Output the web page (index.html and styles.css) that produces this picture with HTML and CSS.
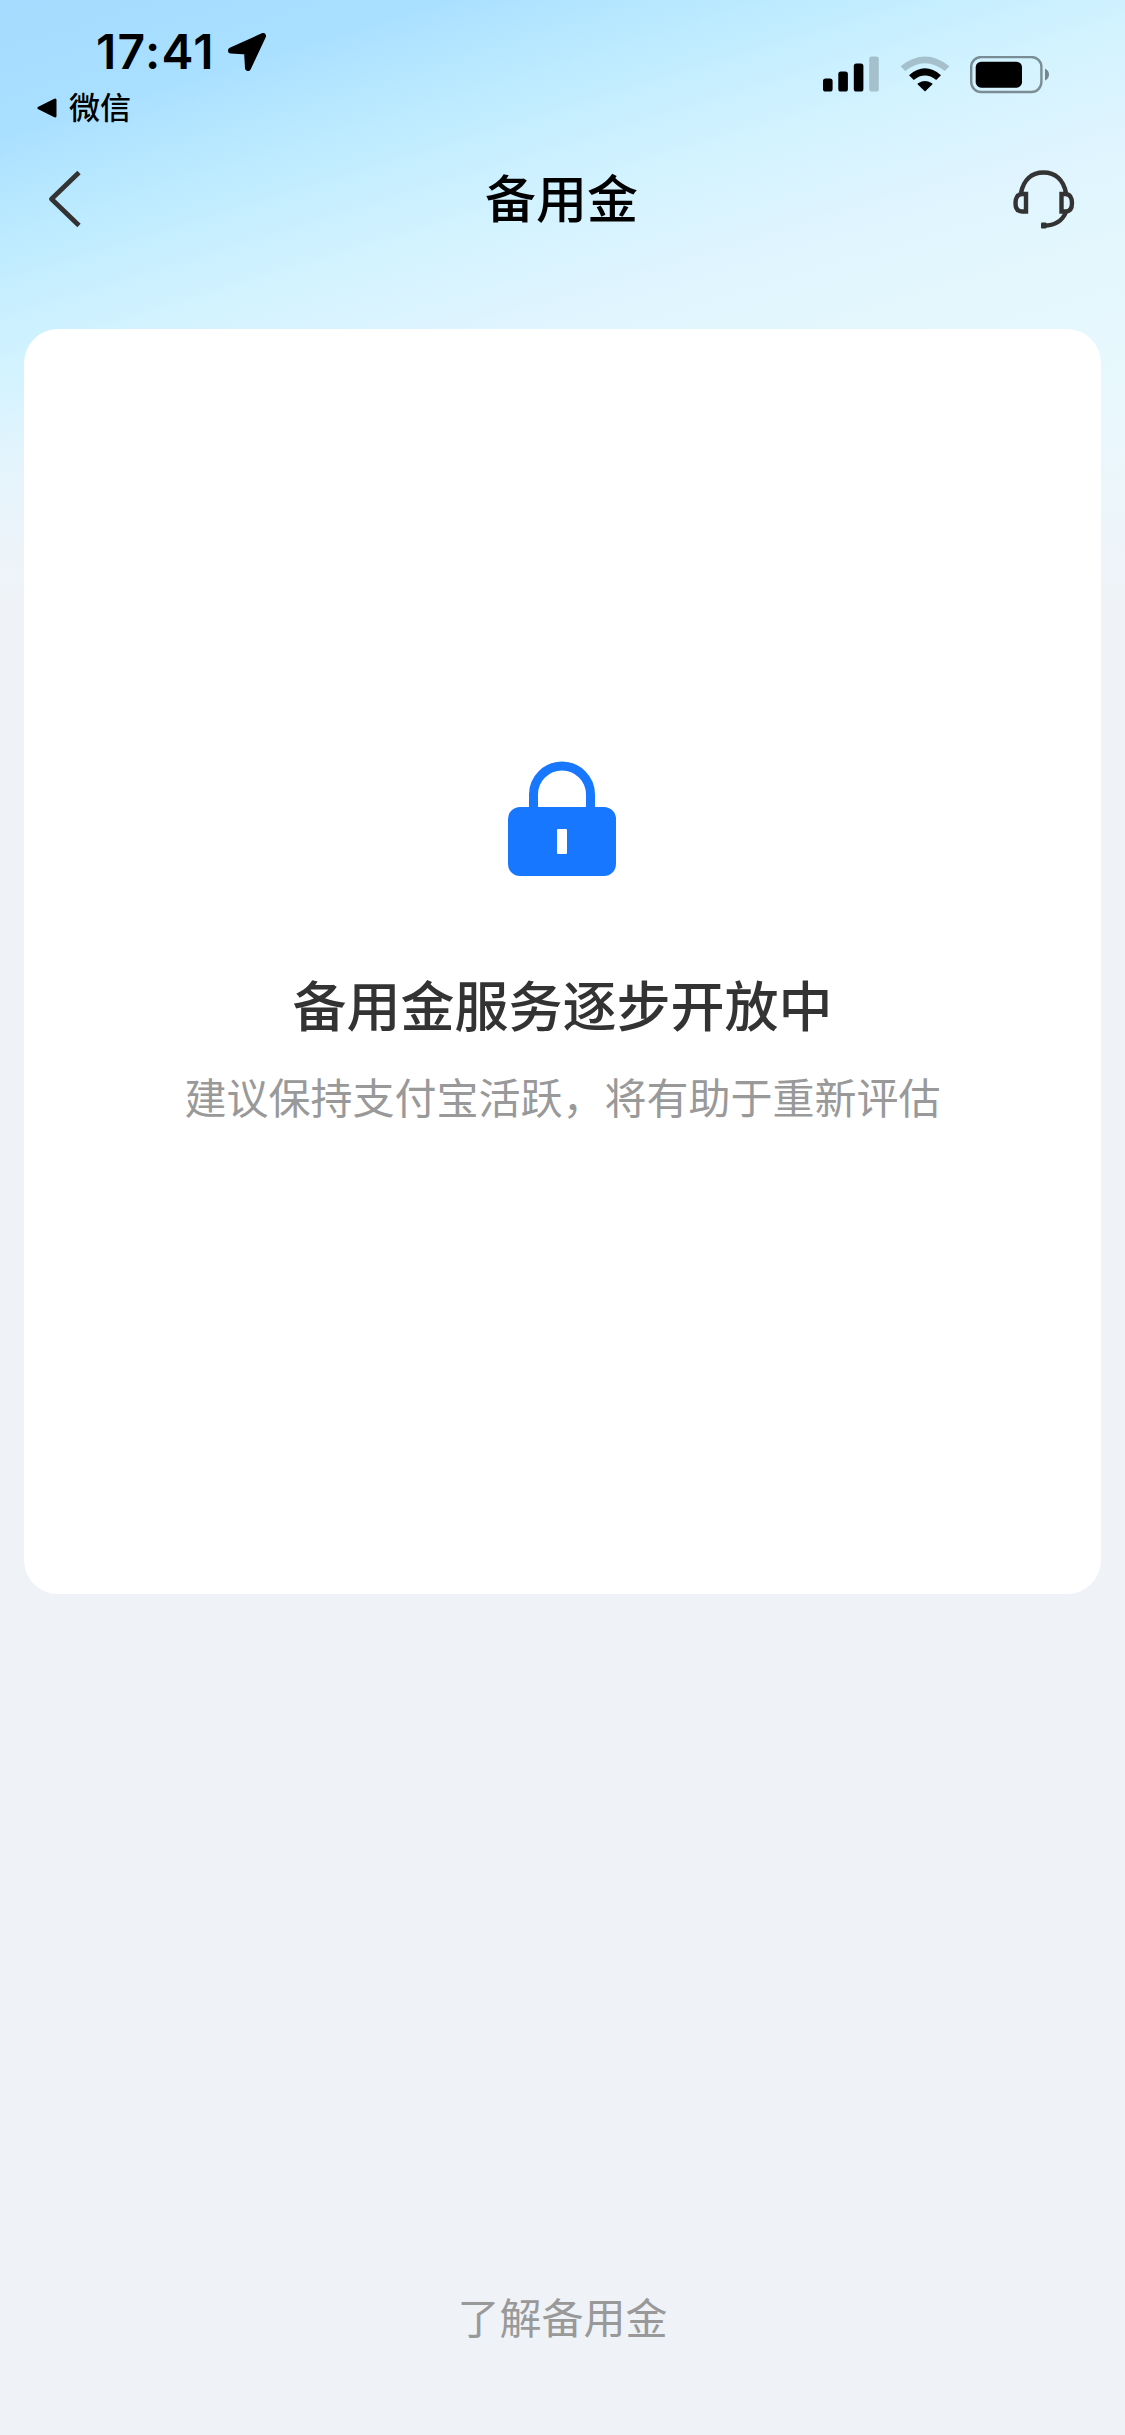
FILE: index.html
```html
<!DOCTYPE html>
<html lang="zh-CN">
<head>
    <meta charset="UTF-8">
    <meta name="viewport" content="width=device-width, initial-scale=1.0">
    <title>备用金</title>
    <link rel="stylesheet" href="styles.css">
</head>
<body>
    <header>
        <div class="status-bar">
            <div class="status-left">
                <div class="clock">
                    <span class="time">17:41</span>
                    <svg class="location" width="38" height="38" viewBox="0 0 38 38">
                        <path d="M3 17.5 L35 3 L20 35 L19 18.5 Z" fill="#000" stroke="#000" stroke-width="6" stroke-linejoin="round"/>
                    </svg>
                </div>
                <a class="back-app" href="#">
                    <svg width="20" height="20" viewBox="0 0 20 20">
                        <path d="M2 10 L18 2 V18 Z" fill="#000" stroke="#000" stroke-width="3" stroke-linejoin="round"/>
                    </svg>
                    <span>微信</span>
                </a>
            </div>
            <div class="status-right">
                <svg class="signal" width="56" height="36" viewBox="0 0 56 36">
                    <rect x="0" y="22.5" width="9.6" height="13" rx="2.6"/>
                    <rect x="15.3" y="15.5" width="9.6" height="20" rx="2.6"/>
                    <rect x="30.8" y="7.5" width="9.6" height="28" rx="2.6"/>
                    <rect x="46.2" y="0.5" width="9.6" height="35" rx="2.6" opacity="0.2"/>
                </svg>
                <svg class="wifi" width="50" height="36" viewBox="0 0 50 36">
                    <path d="M25 35.5 L17.5 28.3 Q17.5 27.5 18.5 27 Q25 23 31.500 27 Q32.500 27.500 32.500 28.300 Z"/>
                    <path d="M9 19.2 Q25 5.5 41 19.2 L36.2 24 Q25 15.2 13.8 24 Z"/>
                    <path d="M0.6 10.2 Q25 -9.2 49.4 10.2 L44.8 15.1 Q25 -0.8 5.2 15.1 Z" opacity="0.2"/>
                </svg>
                <svg class="battery" width="80" height="38" viewBox="0 0 80 38">
                    <rect x="1.2" y="1" width="70.2" height="35" rx="10" fill="none" stroke="#000" stroke-opacity="0.42" stroke-width="2.4"/>
                    <rect x="5.7" y="5.7" width="46.3" height="26" rx="5.5"/>
                    <path d="M75 12.5 Q79 14.5 79 18.5 Q79 22.5 75 24.5 Z" opacity="0.45"/>
                </svg>
            </div>
        </div>
        <nav>
            <a href="#">
                <svg width="36" height="58" viewBox="0 0 36 58">
                    <path d="M31 2.5 L3.5 29 L31 55.5" fill="none" stroke="#333" stroke-width="4.8" stroke-linejoin="round"/>
                </svg>
            </a>
            <h1>备用金</h1>
            <a href="#">
                <svg width="62" height="60" viewBox="0 0 62 60" fill="none" stroke="#333" stroke-width="4.4">
                    <path d="M8 23 C10.5 10 18.5 2.5 30.5 2.5 C42.5 2.5 50.5 10 53 23"/>
                    <path d="M13 24 H9 C4.5 24 2.5 28 2.5 33 C2.5 38 4.5 41.5 9 41.5 H13 Z"/>
                    <path d="M48.5 24 H52.5 C57 24 59 28 59 33 C59 38 57 41.5 52.5 41.5 H48.5 Z"/>
                    <path d="M53 42 C49.5 50.5 42 55.5 31 55.5"/>
                    <rect x="28" y="52.5" width="5.5" height="6" rx="1" fill="#333" stroke="none"/>
                </svg>
            </a>
        </nav>
    </header>
    <main class="card">
        <svg class="lock" width="109" height="116" viewBox="0 0 109 116">
            <path d="M25.5 50 V33.5 A28.5 28.5 0 0 1 82.5 33.5 V50" fill="none" stroke="#1777ff" stroke-width="9"/>
            <rect x="0" y="46" width="108" height="69" rx="12" fill="#1777ff"/>
            <rect x="49" y="68" width="10" height="25" rx="1" fill="#fff"/>
        </svg>
        <h2>备用金服务逐步开放中</h2>
        <p>建议保持支付宝活跃，将有助于重新评估</p>
    </main>
    <footer>
        <a href="#">了解备用金</a>
    </footer>
</body>
</html>
```

FILE: styles.css
```css
* {
    box-sizing: border-box;
}
body {
    font-family: Inter, 'Noto Sans CJK SC', sans-serif;
    margin: 0;
    min-height: 2435px;
    display: flex;
    flex-direction: column;
    background:
        linear-gradient(180deg, rgba(239, 243, 248, 0) 0, rgba(239, 243, 248, 0) 390px, #eff3f8 600px),
        linear-gradient(163deg, #a5dcff 0, #a9dfff 125px, #b9e9ff 210px, #c8efff 290px, #d4f3ff 365px, #dff4fe 460px, #e3f7fd 560px, #e8f8fd 700px);
    background-color: #eff3f8;
    color: #000;
}
a {
    color: inherit;
    text-decoration: none;
}
svg {
    display: block;
    flex: none;
}
.status-bar {
    height: 150px;
    padding: 28px 75px 0 37px;
    display: flex;
    justify-content: space-between;
}
.clock {
    display: flex;
    align-items: center;
    height: 48px;
    padding-left: 59px;
    gap: 14px;
}
.time {
    font-size: 48px;
    font-weight: 600;
    line-height: 48px;
    letter-spacing: 1.3px;
    width: 118px;
    white-space: nowrap;
}
.back-app {
    display: flex;
    align-items: center;
    gap: 12px;
    height: 36px;
    margin-top: 14px;
    font-size: 31px;
    font-weight: 500;
    line-height: 36px;
}
.status-right {
    display: flex;
    align-items: flex-start;
    padding-top: 28px;
}
.wifi {
    margin: 0 20px 0 21px;
}
nav {
    height: 179px;
    padding: 20px 50px 0 48px;
    display: grid;
    grid-template-columns: 80px 1fr 80px;
    align-items: start;
}
nav a:last-child {
    justify-self: end;
}
h1 {
    margin: 3px 0 0;
    font-size: 51px;
    font-weight: 500;
    line-height: 54px;
    text-align: center;
}
.card {
    height: 1265px;
    margin: 0 24px;
    padding-top: 432px;
    border-radius: 34px;
    background: #fff;
    display: flex;
    flex-direction: column;
    align-items: center;
}
h2 {
    margin: 96px 0 0;
    font-size: 54px;
    font-weight: 500;
    line-height: 70px;
    color: #333;
}
.card p {
    margin: 28px 0 0;
    font-size: 42px;
    line-height: 56px;
    color: #999;
}
footer {
    margin-top: auto;
    padding-bottom: 88px;
    text-align: center;
    font-size: 42px;
    line-height: 56px;
    color: #999;
}
```
